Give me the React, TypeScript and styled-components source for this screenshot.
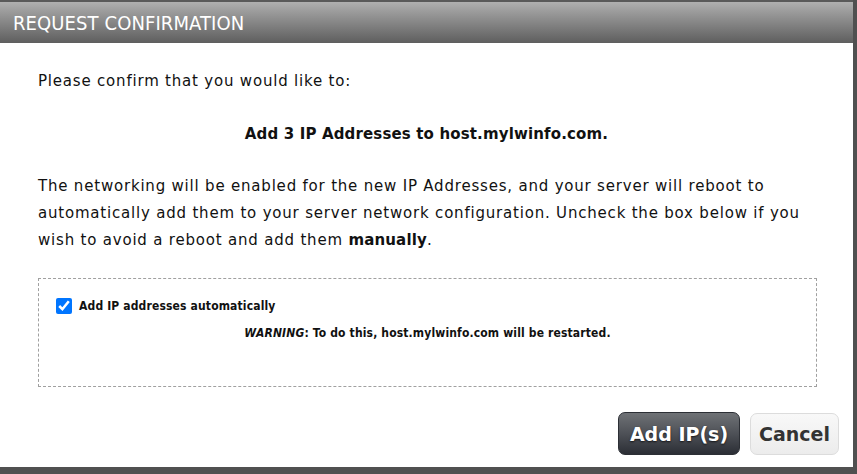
import React from "react";
import styled, { createGlobalStyle } from "styled-components";

const Global = createGlobalStyle`
  html, body { margin: 0; padding: 0; background: #505050; }
  body { width: 857px; height: 474px; overflow: hidden; font-family: "DejaVu Sans", Verdana, sans-serif; }
`;

const Dialog = styled.div`
  width: 853px;
  height: 467px;
  background: #ffffff;
  display: flex;
  flex-direction: column;
`;

const Header = styled.div`
  height: 43px;
  box-sizing: border-box;
  border-top: 2px solid #5a5a5a;
  background: linear-gradient(to bottom, #b0b0b0 0%, #9a9a9a 25%, #7a7a7a 65%, #5e5e5e 100%);
  display: flex;
  align-items: center;
  padding: 0 0 0 13px;
`;

const Title = styled.h1`
  margin: 0;
  font-family: "DejaVu Sans Condensed", "DejaVu Sans", sans-serif;
  font-weight: normal;
  font-size: 20px;
  color: #ffffff;
  letter-spacing: 0.1px;
`;

const Body = styled.div`
  display: flex;
  flex-direction: column;
  padding: 0 38px;
  color: #111;
  font-size: 15px;
`;

const Intro = styled.p`
  margin: 28px 0 0 0;
  line-height: 20px;
  letter-spacing: 0.8px;
`;

const Action = styled.p`
  margin: 33px 0 0 0;
  text-align: center;
  font-weight: bold;
  line-height: 20px;
  letter-spacing: 0.15px;
`;

const Explain = styled.p`
  margin: 29px 0 0 0;
  line-height: 27px;
  letter-spacing: 0.8px;
  b { letter-spacing: 0.15px; }
`;

const OptionBox = styled.div`
  margin-top: 24px;
  margin-right: -2px;
  height: 109px;
  box-sizing: border-box;
  border: 1px dashed #a0a0a0;
  padding: 19px 17px 0 17px;
  font-family: "DejaVu Sans Condensed", "DejaVu Sans", sans-serif;
  font-size: 12px;
  font-weight: bold;
  letter-spacing: 0.15px;
`;

const CheckRow = styled.label`
  display: flex;
  align-items: center;
  gap: 7px;
`;

const Check = styled.input`
  width: 16px;
  height: 16px;
  margin: 0;
  accent-color: #0075ff;
`;

const Warning = styled.div`
  margin-top: 12px;
  text-align: center;
  em { font-style: italic; }
`;

const Footer = styled.div`
  display: flex;
  justify-content: flex-end;
  gap: 10px;
  padding: 25px 14px 0 0;
`;

const Button = styled.button<{ $primary?: boolean }>`
  height: 43px;
  box-sizing: border-box;
  border-radius: 7px;
  font-family: "DejaVu Sans", Verdana, sans-serif;
  font-weight: bold;
  font-size: 19px;
  padding: 0 6px;
  cursor: pointer;
  ${(p) =>
    p.$primary
      ? `
    width: 122px;
    color: #ffffff;
    border: 1px solid #2c2f35;
    background: linear-gradient(to bottom, #6f7276 0%, #4e5157 50%, #2b2e35 100%);
    text-shadow: 0 1px 2px rgba(0,0,0,0.7);
  `
      : `
    width: 89px;
    height: 42px;
    margin-top: 1px;
    color: #333333;
    border: 1px solid #dcdcdc;
    background: linear-gradient(to bottom, #f8f8f8 0%, #ececec 100%);
  `}
`;

export default function App() {
  return (
    <>
      <Global />
      <Dialog>
        <Header>
          <Title>REQUEST CONFIRMATION</Title>
        </Header>
        <Body>
          <Intro>Please confirm that you would like to:</Intro>
          <Action>Add 3 IP Addresses to host.mylwinfo.com.</Action>
          <Explain>
            The networking will be enabled for the new IP Addresses, and your server will reboot to
            automatically add them to your server network configuration. Uncheck the box below if you
            wish to avoid a reboot and add them <b>manually</b>.
          </Explain>
          <OptionBox>
            <CheckRow>
              <Check type="checkbox" defaultChecked />
              Add IP addresses automatically
            </CheckRow>
            <Warning>
              <em>WARNING</em>: To do this, host.mylwinfo.com will be restarted.
            </Warning>
          </OptionBox>
        </Body>
        <Footer>
          <Button $primary>Add IP(s)</Button>
          <Button>Cancel</Button>
        </Footer>
      </Dialog>
    </>
  );
}
